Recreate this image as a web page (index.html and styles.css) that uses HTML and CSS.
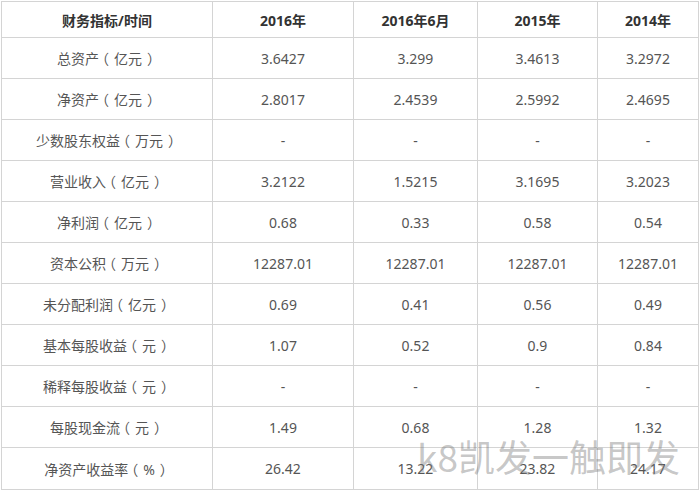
FILE: index.html
```html
<!DOCTYPE html>
<html lang="zh">
<head>
<meta charset="utf-8">
<title>财务指标</title>
<link rel="stylesheet" href="styles.css">
</head>
<body>
<div class="wrap">
<table class="fin">
<colgroup>
<col class="c1"><col class="c2"><col class="c3"><col class="c4"><col class="c5">
</colgroup>
<thead>
<tr><th>财务指标/时间</th><th>2016年</th><th>2016年6月</th><th>2015年</th><th>2014年</th></tr>
</thead>
<tbody>
<tr><td>总资产<span class="po">（</span>亿元<span class="pc">）</span></td><td>3.6427</td><td>3.299</td><td>3.4613</td><td>3.2972</td></tr>
<tr><td>净资产<span class="po">（</span>亿元<span class="pc">）</span></td><td>2.8017</td><td>2.4539</td><td>2.5992</td><td>2.4695</td></tr>
<tr><td>少数股东权益<span class="po">（</span>万元<span class="pc">）</span></td><td>-</td><td>-</td><td>-</td><td>-</td></tr>
<tr><td>营业收入<span class="po">（</span>亿元<span class="pc">）</span></td><td>3.2122</td><td>1.5215</td><td>3.1695</td><td>3.2023</td></tr>
<tr><td>净利润<span class="po">（</span>亿元<span class="pc">）</span></td><td>0.68</td><td>0.33</td><td>0.58</td><td>0.54</td></tr>
<tr><td>资本公积<span class="po">（</span>万元<span class="pc">）</span></td><td>12287.01</td><td>12287.01</td><td>12287.01</td><td>12287.01</td></tr>
<tr><td>未分配利润<span class="po">（</span>亿元<span class="pc">）</span></td><td>0.69</td><td>0.41</td><td>0.56</td><td>0.49</td></tr>
<tr><td>基本每股收益<span class="po">（</span>元<span class="pc">）</span></td><td>1.07</td><td>0.52</td><td>0.9</td><td>0.84</td></tr>
<tr><td>稀释每股收益<span class="po">（</span>元<span class="pc">）</span></td><td>-</td><td>-</td><td>-</td><td>-</td></tr>
<tr><td>每股现金流<span class="po">（</span>元<span class="pc">）</span></td><td>1.49</td><td>0.68</td><td>1.28</td><td>1.32</td></tr>
<tr class="last"><td>净资产收益率<span class="po">（</span>%<span class="pc">）</span></td><td>26.42</td><td>13.22</td><td>23.82</td><td>24.17</td></tr>
</tbody>
</table>
<div class="mark">k8凯发一触即发</div>
</div>
</body>
</html>
```
FILE: styles.css
```css
html, body {
  margin: 0;
  padding: 0;
  background: #fff;
}
.wrap {
  position: relative;
  width: 700px;
  height: 492px;
  padding: 1px 0 0 1px;
  box-sizing: border-box;
}
.fin {
  border-collapse: collapse;
  table-layout: fixed;
  width: 697px;
  font-family: "Noto Sans", "Noto Sans CJK SC", sans-serif;
  font-size: 14px;
  color: #555;
}
.c1 { width: 211px; }
.c2 { width: 141px; }
.c3 { width: 124px; }
.c4 { width: 120px; }
.c5 { width: 101px; }
.fin th, .fin td {
  border: 1px solid #d4d4d4;
  text-align: center;
  vertical-align: middle;
  padding: 0;
}
.fin th {
  height: 35px;
  font-weight: bold;
  color: #333;
}
.fin td {
  height: 40px;
}
.fin tr.last td {
  height: 41px;
}
.po, .pc {
  display: inline-block;
  width: 15px;
  text-align: left;
  font-family: "Noto Sans CJK SC", sans-serif;
}
.po { text-indent: -4px; }
.pc { text-indent: 5px; }
.mark {
  position: absolute;
  left: 417px;
  top: 433px;
  font-family: "Noto Sans CJK SC", "Noto Sans", sans-serif;
  font-size: 37px;
  line-height: 46px;
  color: rgba(120, 120, 120, 0.42);
  white-space: nowrap;
}
```
